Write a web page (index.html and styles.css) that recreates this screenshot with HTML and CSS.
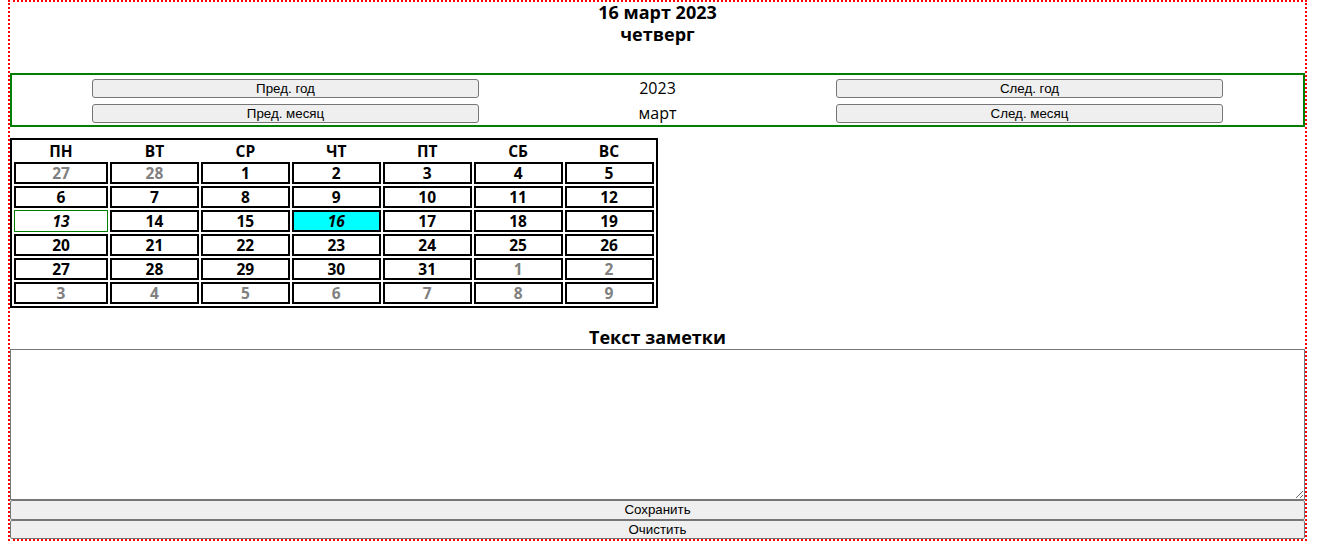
FILE: index.html
```html
<!DOCTYPE html>
<html lang="ru">
<head>
<meta charset="utf-8">
<title>Календарь</title>
<link rel="stylesheet" href="styles.css">
</head>
<body>
<div class="page">
  <h3 class="title">16 март 2023<br>четверг</h3>
  <div class="nav">
    <button class="btn">Пред. год</button>
    <div class="nav-val">2023</div>
    <button class="btn">След. год</button>
    <button class="btn">Пред. месяц</button>
    <div class="nav-val">март</div>
    <button class="btn">След. месяц</button>
  </div>
  <table class="cal">
    <thead>
      <tr><th class="first">ПН</th><th>ВТ</th><th>СР</th><th>ЧТ</th><th>ПТ</th><th>СБ</th><th>ВС</th></tr>
    </thead>
    <tbody>
      <tr><td class="other">27</td><td class="other">28</td><td>1</td><td>2</td><td>3</td><td>4</td><td>5</td></tr>
      <tr><td>6</td><td>7</td><td>8</td><td>9</td><td>10</td><td>11</td><td>12</td></tr>
      <tr><td class="today">13</td><td>14</td><td>15</td><td class="selected">16</td><td>17</td><td>18</td><td>19</td></tr>
      <tr><td>20</td><td>21</td><td>22</td><td>23</td><td>24</td><td>25</td><td>26</td></tr>
      <tr><td>27</td><td>28</td><td>29</td><td>30</td><td>31</td><td class="other">1</td><td class="other">2</td></tr>
      <tr><td class="other">3</td><td class="other">4</td><td class="other">5</td><td class="other">6</td><td class="other">7</td><td class="other">8</td><td class="other">9</td></tr>
    </tbody>
  </table>
  <h3 class="note-title">Текст заметки</h3>
  <textarea class="note"></textarea>
  <button class="wide-btn save">Сохранить</button>
  <button class="wide-btn">Очистить</button>
</div>
</body>
</html>
```
FILE: styles.css
```css
html, body {
  margin: 0;
  padding: 0;
  background: #ffffff;
}
body {
  margin: 0 8px;
  font-family: "Open Sans", "Noto Sans", "DejaVu Sans", sans-serif;
  color: #000;
}
.page {
  width: 1295px;
  border: 2px dotted #ff0000;
}
.title {
  margin: 0;
  font-size: 18px;
  line-height: 21.5px;
  font-weight: 700;
  text-align: center;
}
.nav {
  margin-top: 28px;
  border: 2px solid #008000;
  display: grid;
  grid-template-columns: 1fr 197px 1fr;
  grid-auto-rows: 25px;
  justify-items: center;
  align-items: start;
}
.btn {
  width: 387px;
  height: 19px;
  margin-top: 4px;
  padding: 0;
  background: #efefef;
  border: 1px solid #767676;
  border-radius: 3px;
  font-family: "Liberation Sans", Arial, sans-serif;
  font-size: 13.33px;
  color: #000;
  line-height: 17px;
}
.nav-val {
  font-size: 16px;
  line-height: 25px;
  padding-top: 1px;
  text-align: center;
}
.cal {
  margin-top: 11px;
  width: 647.5px;
  table-layout: fixed;
  border-collapse: separate;
  border-spacing: 2px;
  border: 2px solid #000;
  font-size: 15.5px;
  font-weight: 700;
}
.cal th {
  padding: 0;
  height: 18px;
  line-height: 18px;
  text-align: center;
  font-weight: 700;
}
.cal th.first {
  width: 94px;
}
.cal td {
  border: 2px solid #000;
  padding: 0;
  height: 18px;
  line-height: 18px;
  text-align: center;
}
.cal td.other {
  color: #808080;
}
.cal td.today {
  border: 1px solid #008000;
  font-style: italic;
}
.cal td.selected {
  background: #00ffff;
  font-style: italic;
}
.note-title {
  margin: 19px 0 0;
  font-size: 18px;
  line-height: 21.5px;
  font-weight: 700;
  text-align: center;
}
.note {
  display: block;
  box-sizing: border-box;
  width: 100%;
  height: 151.5px;
  margin: 0;
  border: 1px solid #767676;
  padding: 2px;
}
.wide-btn {
  display: block;
  box-sizing: border-box;
  width: 100%;
  height: 19.5px;
  margin: 0;
  padding: 0;
  background: #efefef;
  border: 1px solid #767676;
  border-radius: 2px;
  font-family: "Liberation Sans", Arial, sans-serif;
  font-size: 13.33px;
  line-height: 17px;
  color: #000;
}
```
